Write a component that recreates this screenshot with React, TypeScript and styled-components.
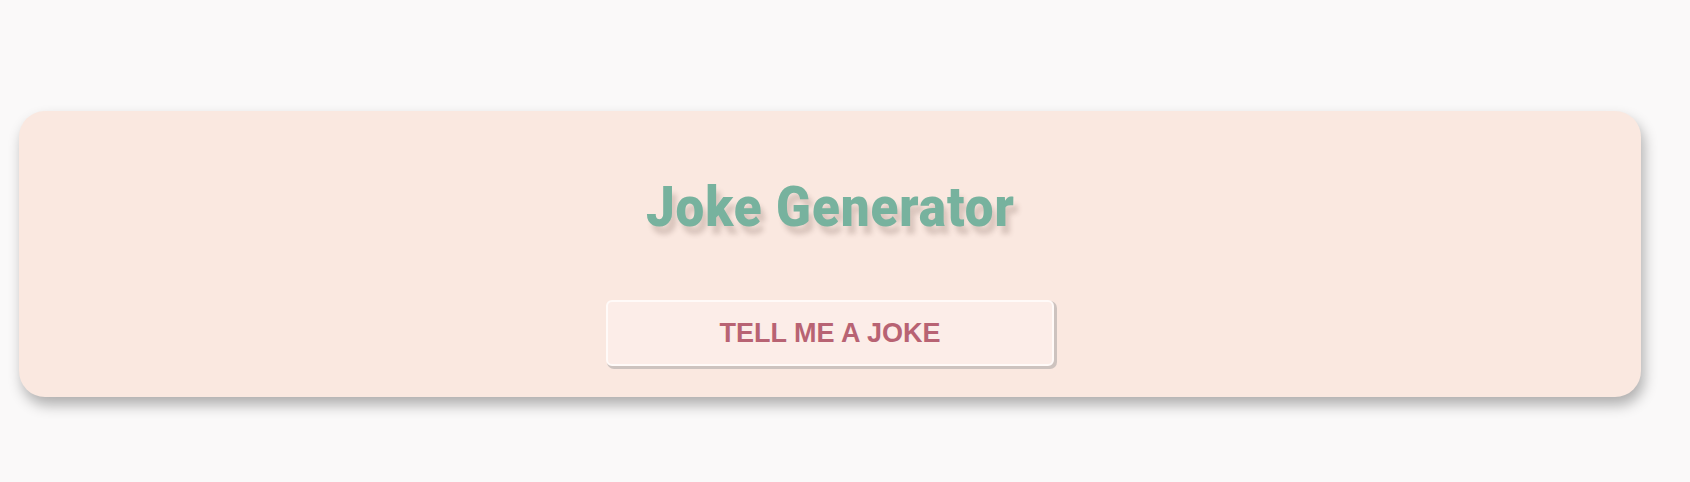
import React from "react";
import styled, { createGlobalStyle } from "styled-components";

const GlobalStyle = createGlobalStyle`
  html, body {
    margin: 0;
    padding: 0;
    background: #faf9f9;
  }
  body {
    font-family: "Liberation Sans", Arial, sans-serif;
  }
`;

const Page = styled.div`
  padding: 111px 0 60px 19px;
  background: #faf9f9;
`;

const Card = styled.section`
  width: 1622px;
  box-sizing: border-box;
  background: #fae8e0;
  border-radius: 26px;
  box-shadow: 3px 8px 14px rgba(0, 0, 0, 0.3);
  display: flex;
  flex-direction: column;
  align-items: center;
  padding: 66px 0 31px;
`;

const Title = styled.h1`
  margin: 0 0 63px;
  font-family: Impact, Roboto, Inter, sans-serif;
  font-weight: 900;
  font-size: 55px;
  line-height: 60px;
  letter-spacing: 1px;
  color: #77b29e;
`;

const TitleText = styled.span`
  display: inline-block;
  transform: scaleX(0.93);
  text-shadow: 5px 8px 5px rgba(90, 60, 50, 0.2);
`;

const JokeButton = styled.button`
  width: 448px;
  height: 66px;
  box-sizing: border-box;
  background: #fcede8;
  border: 2px solid #fffaf8;
  border-radius: 6px;
  box-shadow: 2px 2px 0 1px #cdc3bf;
  font-family: "Liberation Sans", Arial, sans-serif;
  font-weight: 700;
  font-size: 27px;
  color: #b86373;
  cursor: pointer;
`;

export default function App() {
  return (
    <>
      <GlobalStyle />
      <Page>
        <Card>
          <Title>
            <TitleText>Joke Generator</TitleText>
          </Title>
          <JokeButton>TELL ME A JOKE</JokeButton>
        </Card>
      </Page>
    </>
  );
}
